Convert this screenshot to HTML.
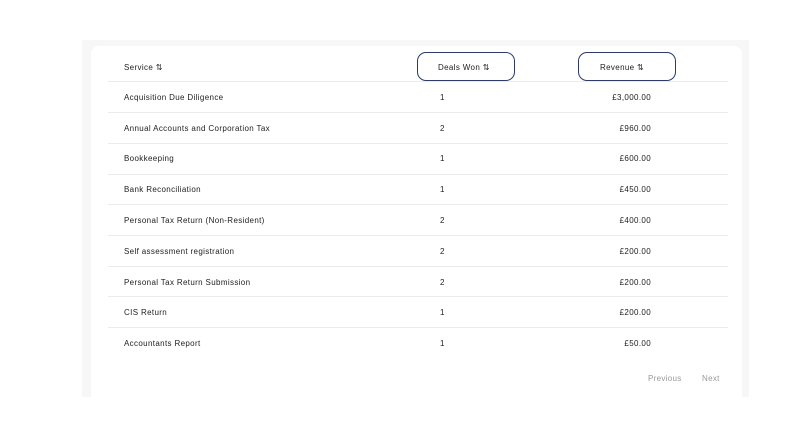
<!DOCTYPE html>
<html><head><style>
body{margin:0;width:801px;height:441px;background:#fff;font-family:"Liberation Sans",sans-serif;position:relative;overflow:hidden;color:#222}
.outer{position:absolute;left:82px;top:40px;width:667px;height:357px;background:#f7f7f7}
.card{position:absolute;left:91px;top:46px;width:651px;height:351px;background:#fff;border-radius:8px 8px 0 0}
.t{position:absolute;font-size:8px;white-space:nowrap;letter-spacing:0.35px}
.line{position:absolute;left:108px;width:620px;height:1px;background:#ececec}
.btn{position:absolute;top:52px;width:96px;height:27px;border:1.5px solid #2d3a6b;border-radius:9px}
.pg{position:absolute;font-size:8px;color:#999;top:374px;letter-spacing:0.3px}
</style></head><body>
<div class="outer"></div>
<div class="card"></div>
<div class="btn" style="left:417px"></div>
<div class="btn" style="left:578px"></div>
<div class="t" style="left:124px;top:63px">Service ⇅</div>
<div class="t" style="left:438px;top:63px">Deals Won ⇅</div>
<div class="t" style="left:600px;top:63px">Revenue ⇅</div>
<div class="line" style="top:81px"></div>
<div class="t" style="left:124px;top:93px">Acquisition Due Diligence</div><div class="t" style="left:440px;top:93px">1</div><div class="t" style="right:150px;top:93px">£3,000.00</div>
<div class="line" style="top:112px"></div>
<div class="t" style="left:124px;top:124px">Annual Accounts and Corporation Tax</div><div class="t" style="left:440px;top:124px">2</div><div class="t" style="right:150px;top:124px">£960.00</div>
<div class="line" style="top:143px"></div>
<div class="t" style="left:124px;top:154px">Bookkeeping</div><div class="t" style="left:440px;top:154px">1</div><div class="t" style="right:150px;top:154px">£600.00</div>
<div class="line" style="top:174px"></div>
<div class="t" style="left:124px;top:185px">Bank Reconciliation</div><div class="t" style="left:440px;top:185px">1</div><div class="t" style="right:150px;top:185px">£450.00</div>
<div class="line" style="top:204px"></div>
<div class="t" style="left:124px;top:216px">Personal Tax Return (Non-Resident)</div><div class="t" style="left:440px;top:216px">2</div><div class="t" style="right:150px;top:216px">£400.00</div>
<div class="line" style="top:235px"></div>
<div class="t" style="left:124px;top:247px">Self assessment registration</div><div class="t" style="left:440px;top:247px">2</div><div class="t" style="right:150px;top:247px">£200.00</div>
<div class="line" style="top:266px"></div>
<div class="t" style="left:124px;top:278px">Personal Tax Return Submission</div><div class="t" style="left:440px;top:278px">2</div><div class="t" style="right:150px;top:278px">£200.00</div>
<div class="line" style="top:296px"></div>
<div class="t" style="left:124px;top:308px">CIS Return</div><div class="t" style="left:440px;top:308px">1</div><div class="t" style="right:150px;top:308px">£200.00</div>
<div class="line" style="top:327px"></div>
<div class="t" style="left:124px;top:339px">Accountants Report</div><div class="t" style="left:440px;top:339px">1</div><div class="t" style="right:150px;top:339px">£50.00</div>
<div class="pg" style="left:648px">Previous</div>
<div class="pg" style="left:702px">Next</div>
</body></html>
